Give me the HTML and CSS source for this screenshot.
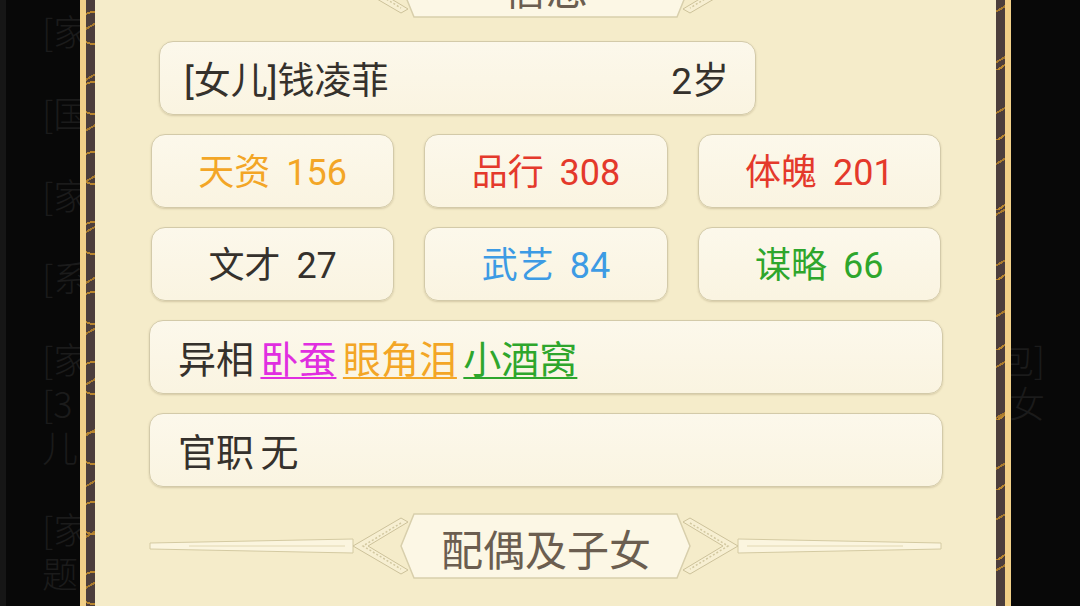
FILE: index.html
```html
<!DOCTYPE html>
<html lang="zh-CN">
<head>
  <meta charset="utf-8">
  <title>信息</title>
  <link rel="stylesheet" href="styles.css">
</head>
<body>
  <!-- chat log behind the popup -->
  <div class="backdrop">
    <div class="msg">
      <div class="line"><span>[家族]钱府喜添千金</span></div>
    </div>
    <div class="msg">
      <div class="line"><span>[国事]边关告急</span></div>
    </div>
    <div class="msg">
      <div class="line"><span>[家族]钱凌菲满岁</span></div>
    </div>
    <div class="msg">
      <div class="line"><span>[系统]今日俸禄已发放</span></div>
    </div>
    <div class="msg">
      <div class="line"><span>[家族]族长发放了[红</span><span>包]</span></div>
      <div class="line"><span>[3 两]，恭贺钱府添</span><span>女</span></div>
      <div class="line"><span>儿</span></div>
    </div>
    <div class="msg">
      <div class="line"><span>[家族]今日课业</span></div>
      <div class="line"><span>题</span></div>
    </div>
  </div>

  <div class="dialog">
    <div class="frame">
      <div class="panel">
        <div class="divider divider-top">
          <svg class="divider-art" viewBox="0 0 794 66" width="794" height="66">
            <polygon class="rail" points="1,30 204,26 204,40 1,36"/>
            <polygon class="rail" points="792,30 589,26 589,40 792,36"/>
            <path class="streak" d="M40 33H196M598 33H754"/>
            <polygon class="horn" points="204,33 252,5 259,9 219,33 259,57 252,61"/>
            <polygon class="horn" points="589,33 541,5 534,9 574,33 534,57 541,61"/>
            <path class="horn-inner" d="M252 10L214 33L252 56M541 10L579 33L541 56"/>
            <polygon class="tab" points="265,1 528,1 541,33 528,65 265,65 252,33"/>
          </svg>
          <h2 class="divider-title">信息</h2>
        </div>

        <div class="card name-card">
          <span>[女儿]钱凌菲</span>
          <span>2岁</span>
        </div>

        <div class="stats">
          <div class="card stat gold">天资 156</div>
          <div class="card stat red">品行 308</div>
          <div class="card stat red">体魄 201</div>
          <div class="card stat">文才 27</div>
          <div class="card stat blue">武艺 84</div>
          <div class="card stat green">谋略 66</div>
        </div>

        <div class="card row-card">
          <span>异相 <span class="trait pink">卧蚕</span> <span class="trait gold">眼角泪</span> <span class="trait green">小酒窝</span></span>
        </div>

        <div class="card row-card">
          <span>官职 无</span>
        </div>

        <div class="divider divider-bottom">
          <svg class="divider-art" viewBox="0 0 794 66" width="794" height="66">
            <polygon class="rail" points="1,30 204,26 204,40 1,36"/>
            <polygon class="rail" points="792,30 589,26 589,40 792,36"/>
            <path class="streak" d="M40 33H196M598 33H754"/>
            <polygon class="horn" points="204,33 252,5 259,9 219,33 259,57 252,61"/>
            <polygon class="horn" points="589,33 541,5 534,9 574,33 534,57 541,61"/>
            <path class="horn-inner" d="M252 10L214 33L252 56M541 10L579 33L541 56"/>
            <polygon class="tab" points="265,1 528,1 541,33 528,65 265,65 252,33"/>
          </svg>
          <h2 class="divider-title">配偶及子女</h2>
        </div>
      </div>
    </div>
  </div>
</body>
</html>
```

FILE: styles.css
```css
html, body {
    margin : 0;
    height : 100%;
}

body {
    position : relative;
    overflow : hidden;
    background-color : #080808;
    box-shadow : inset 6px 0 0 #161616;
    font-family : Roboto, "Noto Sans CJK SC", sans-serif;
}

/* log lines under the popup */
div.backdrop {
    padding : 8px 35px 0 42px;
    font-family : "Noto Sans CJK SC", sans-serif;
    font-weight : 300;
    font-size : 36px;
    color : #1b1b1b;
}

div.backdrop div.msg {
    margin-bottom : 38px;
}

div.backdrop div.line {
    display : flex;
    justify-content : space-between;
    height : 44px;
    line-height : 44px;
    white-space : nowrap;
}

/* popup with its carved frame */
div.dialog {
    position : absolute;
    left : 80px;
    top : 0;
    bottom : 0;
    width : 931px;
    box-sizing : border-box;
    display : flex;
    border-left : 6px solid #f1cf88;
    border-right : 6px solid #f1cf88;
}

div.frame {
    flex : 1;
    display : flex;
    padding : 0 9px;
    background :
        repeating-radial-gradient(circle at 20% 40%, transparent 0 15px, #b9862f 15px 17px, transparent 17px 32px),
        repeating-linear-gradient(150deg, transparent 0 24px, #a87a2e 24px 26px, transparent 26px 44px),
        #4c3e3c;
    background-size : 40px 70px, auto;
}

div.panel {
    flex : 1;
    display : flex;
    flex-direction : column;
    gap : 19px;
    padding : 0 53px 0 54px;
    background-color : #f5ecca;
    overflow : hidden;
}

/* section headings */
div.divider {
    display : grid;
    height : 66px;
    flex : none;
}

div.divider-top {
    margin-top : -48px;
}

div.divider-bottom {
    margin-top : 7px;
}

svg.divider-art {
    grid-area : 1 / 1;
    display : block;
}

svg.divider-art .rail {
    fill : #fbf5df;
    stroke : #d4caa2;
    stroke-width : 1;
}

svg.divider-art .streak {
    stroke : #e2d8b3;
    stroke-width : 1;
    fill : none;
}

svg.divider-art .horn {
    fill : #f7efd2;
    stroke : #cdc29a;
    stroke-width : 1;
}

svg.divider-art .horn-inner {
    fill : none;
    stroke : #d2c8a0;
    stroke-width : 1.5;
    stroke-dasharray : 2 2;
}

svg.divider-art .tab {
    fill : #fcf7e5;
    stroke : #d8cfac;
    stroke-width : 1.5;
}

h2.divider-title {
    grid-area : 1 / 1;
    justify-self : center;
    align-self : center;
    margin : 0;
    padding-top : 4px;
    font-family : "Noto Sans CJK SC", sans-serif;
    font-size : 42px;
    font-weight : 400;
    line-height : 1;
    color : #6b5e50;
}

/* boxes */
div.card {
    box-sizing : border-box;
    height : 74px;
    display : flex;
    align-items : center;
    border : 1px solid #d3caa9;
    border-radius : 14px;
    background : linear-gradient(#fcf8eb, #faf4e1);
    box-shadow : 0 1px 2px rgba(120, 100, 60, 0.25);
    font-size : 36px;
    color : #35312c;
    white-space : nowrap;
}

div.name-card {
    margin-top : 4px;
    margin-left : 10px;
    width : 597px;
    justify-content : space-between;
    padding : 0 26px 0 24px;
    font-size : 37px;
}

div.stats {
    display : grid;
    grid-template-columns : repeat(3, 1fr);
    gap : 19px 30px;
    padding : 0 2px;
}

div.stat {
    justify-content : center;
    word-spacing : 7px;
    padding-bottom : 4px;
}

div.row-card {
    padding-left : 28px;
    font-size : 38px;
    word-spacing : -3px;
    padding-bottom : 2px;
}

span.trait {
    text-decoration : underline;
    text-decoration-thickness : 2px;
    text-underline-offset : 4px;
}

div.card.gold, span.trait.gold   { color : #f3a626; }
div.card.red                     { color : #e4392b; }
div.card.blue                    { color : #3d9be4; }
div.card.green, span.trait.green { color : #2ea62c; }
span.trait.pink                  { color : #e02ee0; }
```
